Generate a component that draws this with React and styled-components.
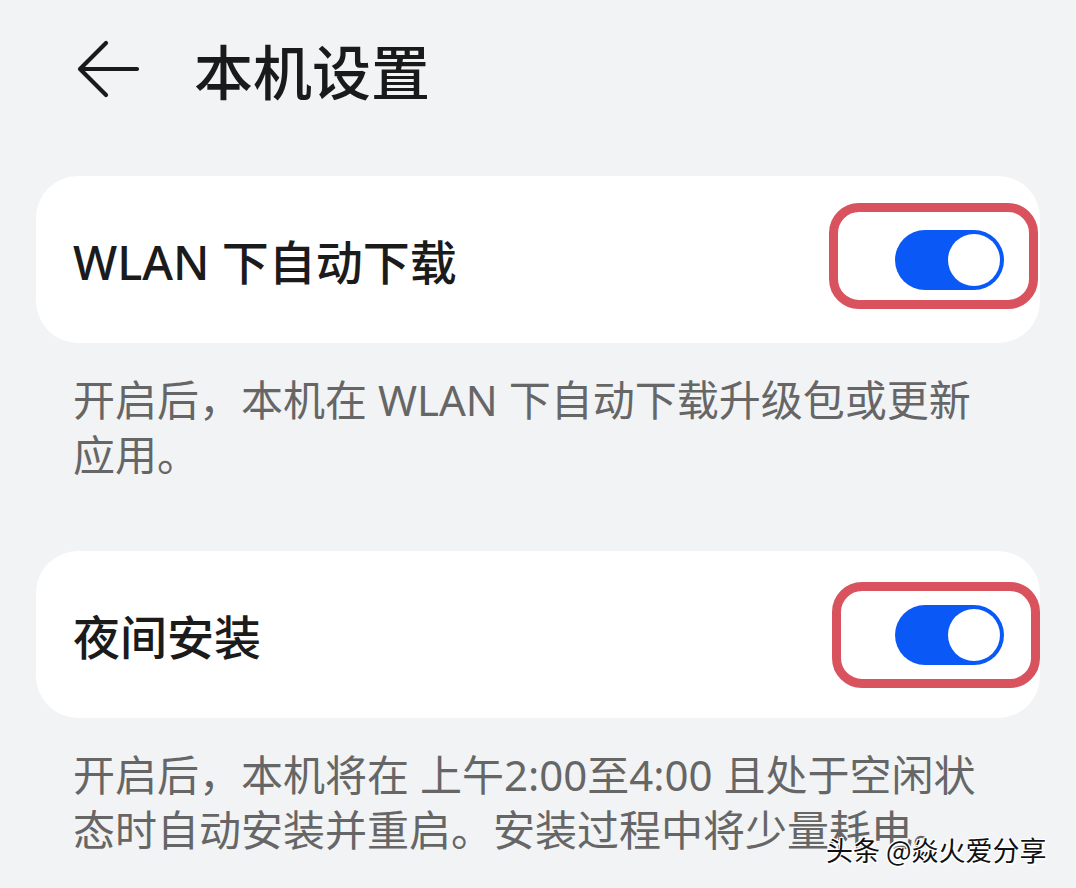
import React from "react";
import styled, { createGlobalStyle } from "styled-components";

const GlobalStyle = createGlobalStyle`
  html, body {
    margin: 0;
    padding: 0;
    background: #f1f3f5;
  }
  * { box-sizing: border-box; }
`;

const FONT = `"Noto Sans", "Noto Sans CJK SC", sans-serif`;

const Page = styled.div`
  position: relative;
  width: 1076px;
  height: 888px;
  overflow: hidden;
  background: #f1f3f5;
  font-family: ${FONT};
`;

const Header = styled.header`
  height: 138px;
  display: flex;
  align-items: center;
  padding-left: 76px;
  gap: 54px;
`;

const BackButton = styled.button`
  width: 64px;
  height: 60px;
  padding: 0;
  border: none;
  background: transparent;
  display: flex;
  align-items: center;
  justify-content: center;
`;

const Title = styled.h1`
  margin: 0;
  font-size: 59px;
  font-weight: 500;
  color: #1a1a1a;
`;

const List = styled.main`
  padding: 38px 36px 0;
`;

const Card = styled.section`
  height: 167px;
  border-radius: 42px;
  background: #ffffff;
  display: flex;
  align-items: center;
  justify-content: space-between;
  padding: 0 36px 0 37px;
  margin-top: ${(p) => p.$top || 0}px;
`;

const RowTitle = styled.div`
  font-size: 47px;
  font-weight: 500;
  color: #1b1b1b;
`;

const ToggleWrap = styled.div`
  position: relative;
`;

const Toggle = styled.div`
  width: 109px;
  height: 60px;
  border-radius: 30px;
  background: #0a59f7;
  display: flex;
  align-items: center;
  justify-content: flex-end;
  padding: 0 4px;
`;

const Knob = styled.div`
  width: 52px;
  height: 52px;
  border-radius: 50%;
  background: #ffffff;
`;

const Highlight = styled.div`
  position: absolute;
  left: ${(p) => p.$l}px;
  right: ${(p) => p.$r}px;
  top: ${(p) => p.$t}px;
  bottom: ${(p) => p.$b}px;
  border: 9px solid #d8535d;
  border-radius: 30px;
  pointer-events: none;
`;

const Description = styled.p`
  margin: 29px 60px 0 37px;
  font-size: 42px;
  line-height: 55px;
  color: #666666;
  font-weight: 400;
`;

const Watermark = styled.div`
  position: absolute;
  left: 826px;
  top: 832px;
  font-family: "Noto Sans CJK SC", sans-serif;
  font-size: 27px;
  line-height: 36px;
  color: #111;
  text-shadow: 1px 1px 0 #fff, -1px -1px 0 #fff, 1px -1px 0 #fff, -1px 1px 0 #fff, 2px 2px 1px rgba(255,255,255,0.8);
  white-space: nowrap;
`;

function BackArrow() {
  return (
    <svg width="64" height="60" viewBox="0 0 64 60" fill="none">
      <path
        d="M30 4 L4 30 L30 56 M4 30 H61"
        stroke="#1a1a1a"
        strokeWidth="4.2"
        strokeLinecap="round"
        strokeLinejoin="round"
      />
    </svg>
  );
}

function Switch({ hl }) {
  return (
    <ToggleWrap>
      <Toggle>
        <Knob />
      </Toggle>
      <Highlight $l={hl[0]} $r={hl[1]} $t={hl[2]} $b={hl[3]} />
    </ToggleWrap>
  );
}

export default function App() {
  return (
    <>
      <GlobalStyle />
      <Page>
        <Header>
          <BackButton aria-label="返回">
            <BackArrow />
          </BackButton>
          <Title>本机设置</Title>
        </Header>
        <List>
          <Card>
            <RowTitle>WLAN 下自动下载</RowTitle>
            <Switch hl={[-66, -34, -27, -19]} />
          </Card>
          <Description>
            开启后，本机在 WLAN 下自动下载升级包或更新应用。
          </Description>
          <Card $top={69}>
            <RowTitle>夜间安装</RowTitle>
            <Switch hl={[-63, -36, -23, -23]} />
          </Card>
          <Description>
            开启后，本机将在 上午2:00至4:00 且处于空闲状态时自动安装并重启。安装过程中将少量耗电。
          </Description>
        </List>
        <Watermark>头条 @焱火爱分享</Watermark>
      </Page>
    </>
  );
}
